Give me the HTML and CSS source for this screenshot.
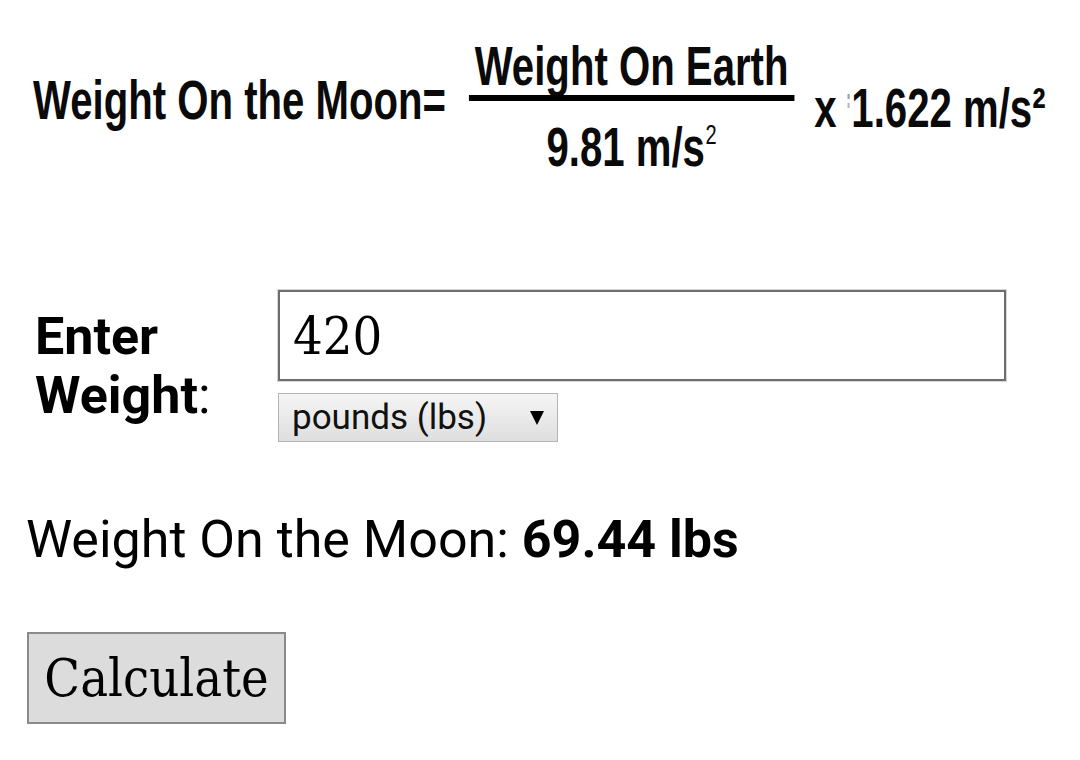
FILE: index.html
```html
<!DOCTYPE html>
<html>
<head>
<meta charset="utf-8">
<title>Weight On the Moon</title>
<link rel="stylesheet" href="styles.css">
</head>
<body>
<div class="page">
  <div class="formula">
    <div class="lhs">Weight On the Moon=</div>
    <div class="frac">
      <div class="num">Weight On Earth</div>
      <div class="bar"></div>
      <div class="den">9.81 m/s<span class="sup">2</span></div>
    </div>
    <div class="rhs">x <span class="tick"></span>1.622 m/s²</div>
  </div>

  <div class="form">
    <div class="label"><b>Enter Weight</b>:</div>
    <div class="fields">
      <input class="weight" type="text" value="420">
      <div class="select-wrap">
        <select class="unit"><option>pounds (lbs)</option></select>
        <span class="arrow"></span>
      </div>
    </div>
  </div>

  <p class="result">Weight On the Moon: <b>69.44 lbs</b></p>

  <button class="calc" type="button">Calculate</button>
</div>
</body>
</html>
```

FILE: styles.css
```css
html, body {
  margin: 0;
  padding: 0;
  background: #ffffff;
}

.page {
  padding: 24px;
  font-family: Roboto, "Noto Sans", sans-serif;
  color: #000;
}

/* ---------- formula (condensed bold, drawn as one narrow block) ---------- */
.formula {
  display: flex;
  align-items: flex-start;
  width: max-content;
  margin-left: 9px;
  padding-top: 14px;
  transform: scaleX(0.717);
  transform-origin: 0 0;
  font-family: "Liberation Sans", Arial, sans-serif;
  font-weight: bold;
  font-size: 56px;
  line-height: 56px;
  color: #0a0a0a;
}

.lhs {
  margin-top: 34px;
  white-space: nowrap;
}

.frac {
  margin-left: 32px;
  display: flex;
  flex-direction: column;
  align-items: center;
}

.num {
  white-space: nowrap;
  padding: 0 8px;
}

.bar {
  align-self: stretch;
  height: 6px;
  margin-top: 1px;
  background: #000;
}

.den {
  margin-top: 18px;
  white-space: nowrap;
}

.sup {
  display: inline-block;
  vertical-align: top;
  font-size: 28px;
  line-height: 28px;
  font-weight: normal;
  margin-top: 2px;
  margin-left: 1px;
}

.rhs {
  margin-left: 28px;
  margin-top: 42px;
  white-space: nowrap;
}

.tick {
  display: inline-block;
  vertical-align: top;
  width: 3px;
  height: 16px;
  margin-top: 14px;
  margin-right: 2px;
  background: linear-gradient(#a0a0a0 0 5px, transparent 5px 9px, #b8b8b8 9px 14px, transparent 14px);
}

/* ---------- form ---------- */
.form {
  display: grid;
  grid-template-columns: 254px 728px;
  margin-top: 115px;
}

.label {
  align-self: center;
  padding-left: 11px;
  font-size: 52px;
  line-height: 59px;
  width: 200px;
}

.fields {
  display: flex;
  flex-direction: column;
  align-items: flex-start;
  gap: 12px;
}

.weight {
  box-sizing: border-box;
  width: 728px;
  height: 91px;
  margin: 0;
  padding: 0 13px;
  border: 2px solid #6e6e6e;
  box-shadow: 0 0 0 1px #d6d6d6;
  font-family: "DejaVu Serif", "Liberation Serif", serif;
  font-stretch: condensed;
  font-size: 52px;
  color: #000;
  background: #fff;
  outline: none;
}

.select-wrap {
  position: relative;
  width: 280px;
  height: 49px;
}

.unit {
  -webkit-appearance: none;
  appearance: none;
  box-sizing: border-box;
  width: 280px;
  height: 49px;
  margin: 0;
  padding: 0 0 0 13px;
  border: 1px solid #b4b4b4;
  border-radius: 0;
  background: linear-gradient(#f5f5f5, #dedede);
  font-family: Roboto, "Noto Sans", sans-serif;
  font-size: 35px;
  color: #111;
}

.arrow {
  position: absolute;
  right: 14px;
  top: 18px;
  width: 0;
  height: 0;
  border-left: 7px solid transparent;
  border-right: 7px solid transparent;
  border-top: 14px solid #000;
  pointer-events: none;
}

/* ---------- result ---------- */
.result {
  margin: 69px 0 0 2px;
  font-size: 52px;
  line-height: 58px;
}

.result b {
  font-weight: bold;
}

/* ---------- button ---------- */
.calc {
  box-sizing: border-box;
  display: block;
  margin: 63px 0 0 3px;
  width: 259px;
  height: 92px;
  padding: 0;
  border: 2px solid #8a8a8a;
  border-radius: 0;
  background: #dcdcdc;
  font-family: "DejaVu Serif", "Liberation Serif", serif;
  font-stretch: condensed;
  font-size: 52px;
  color: #000;
}
```
